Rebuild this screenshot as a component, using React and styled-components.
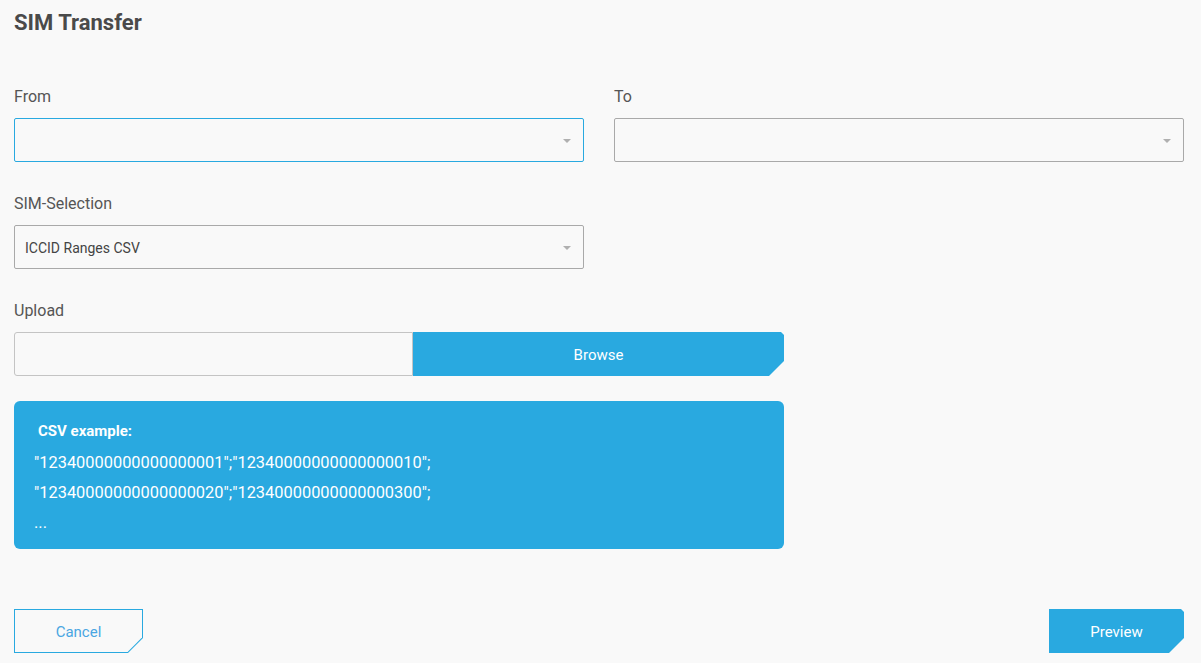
import React from "react";
import styled, { createGlobalStyle } from "styled-components";

const Global = createGlobalStyle`
  html, body { margin: 0; padding: 0; background: #f9f9f9; }
  body { font-family: Roboto, "Liberation Sans", Arial, sans-serif; color: #4a4a4a; }
  * { box-sizing: border-box; }
`;

const BLUE = "#29a9e0";

const Page = styled.div`
  width: 1170px;
  margin-left: 14px;
  padding-top: 8px;
  display: flex;
  flex-direction: column;
`;

const Title = styled.h1`
  margin: 0;
  font-size: 22px;
  line-height: 30px;
  font-weight: 700;
  color: #4a4a4a;
`;

const Row = styled.div`
  display: grid;
  grid-template-columns: 570px 570px;
  column-gap: 30px;
  margin-top: ${(p) => p.$top}px;
`;

const Field = styled.div`
  display: flex;
  flex-direction: column;
  gap: 11px;
`;

const Label = styled.label`
  font-size: 16px;
  line-height: 20px;
  padding-top: 1px;
  color: #555;
  font-weight: 400;
`;

const Select = styled.div`
  height: 44px;
  border: 1px solid ${(p) => (p.$focused ? BLUE : "#a9a9a9")};
  border-radius: 2px;
  background: #f9f9f9;
  display: flex;
  align-items: center;
  justify-content: space-between;
  padding: 2px 12px 0 10px;
  font-size: 14px;
  color: #444;
`;

const Caret = styled.span`
  width: 0;
  height: 0;
  border-left: 4px solid transparent;
  border-right: 4px solid transparent;
  border-top: 4px solid #b0b0b0;
`;

const UploadRow = styled.div`
  display: flex;
  width: 770px;
  height: 44px;
`;

const FileInput = styled.div`
  width: 399px;
  border: 1px solid #c4c4c4;
  border-radius: 3px 0 0 3px;
  background: #f9f9f9;
`;

const BlueButton = styled.button`
  border: none;
  background: ${BLUE};
  color: #fff;
  font-family: inherit;
  font-size: 15px;
  height: 44px;
  width: ${(p) => p.$w}px;
  clip-path: polygon(0 0, calc(100% - 3px) 0, 100% 3px, 100% calc(100% - 15px), calc(100% - 15px) 100%, 0 100%);
  cursor: pointer;
  padding: 2px 0 0 0;
`;

const Browse = styled(BlueButton)`
  flex: 1;
`;

const CsvBox = styled.div`
  margin-top: 25px;
  width: 770px;
  height: 148px;
  border-radius: 6px;
  background: ${BLUE};
  color: #fff;
  padding: 15px 20px 11px 20px;
  font-size: 16.4px;
`;

const CsvHead = styled.div`
  font-weight: 700;
  font-size: 15px;
  line-height: 30px;
  padding-left: 4px;
  margin-bottom: 2px;
`;

const CsvLine = styled.div`
  line-height: 30px;
`;

const Footer = styled.div`
  margin-top: 60px;
  display: flex;
  justify-content: space-between;
`;

const OutlineButton = styled.button`
  position: relative;
  border: none;
  padding: 2px 0 0 0;
  background: ${BLUE};
  width: ${(p) => p.$w}px;
  height: 44px;
  font-family: inherit;
  font-size: 15px;
  color: #4aa6e2;
  cursor: pointer;
  clip-path: polygon(0 0, 100% 0, 100% calc(100% - 15px), calc(100% - 15px) 100%, 0 100%);
  &::before {
    content: "";
    position: absolute;
    inset: 1px;
    background: #f9f9f9;
    clip-path: polygon(0 0, 100% 0, 100% calc(100% - 14.4px), calc(100% - 14.4px) 100%, 0 100%);
  }
  span { position: relative; }
`;

export default function App() {
  return (
    <>
      <Global />
      <Page>
        <Title>SIM Transfer</Title>
        <Row $top={48}>
          <Field>
            <Label>From</Label>
            <Select $focused>
              <span />
              <Caret />
            </Select>
          </Field>
          <Field>
            <Label>To</Label>
            <Select>
              <span />
              <Caret />
            </Select>
          </Field>
        </Row>
        <Row $top={31}>
          <Field>
            <Label>SIM-Selection</Label>
            <Select>
              <span>ICCID Ranges CSV</span>
              <Caret />
            </Select>
          </Field>
        </Row>
        <Row $top={31}>
          <Field>
            <Label>Upload</Label>
            <UploadRow>
              <FileInput />
              <Browse>Browse</Browse>
            </UploadRow>
          </Field>
        </Row>
        <CsvBox>
          <CsvHead>CSV example:</CsvHead>
          <CsvLine>"12340000000000000001";"12340000000000000010";</CsvLine>
          <CsvLine>"12340000000000000020";"12340000000000000300";</CsvLine>
          <CsvLine>...</CsvLine>
        </CsvBox>
        <Footer>
          <OutlineButton $w={129}>
            <span>Cancel</span>
          </OutlineButton>
          <BlueButton $w={135}>Preview</BlueButton>
        </Footer>
      </Page>
    </>
  );
}
